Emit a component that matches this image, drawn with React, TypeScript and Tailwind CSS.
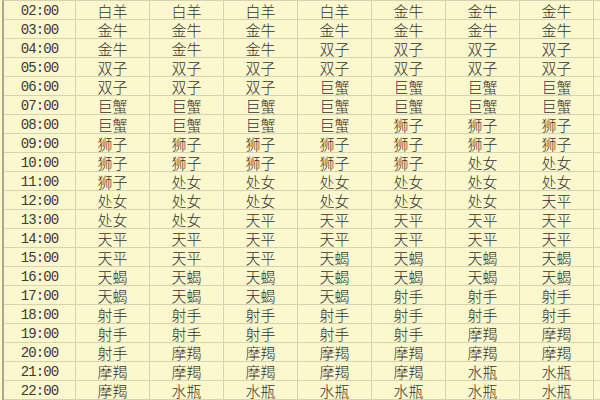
import React from "react";

const rows: [string, string[]][] = [
  ["02:00", ["白羊", "白羊", "白羊", "白羊", "金牛", "金牛", "金牛"]],
  ["03:00", ["金牛", "金牛", "金牛", "金牛", "金牛", "金牛", "金牛"]],
  ["04:00", ["金牛", "金牛", "金牛", "双子", "双子", "双子", "双子"]],
  ["05:00", ["双子", "双子", "双子", "双子", "双子", "双子", "双子"]],
  ["06:00", ["双子", "双子", "双子", "巨蟹", "巨蟹", "巨蟹", "巨蟹"]],
  ["07:00", ["巨蟹", "巨蟹", "巨蟹", "巨蟹", "巨蟹", "巨蟹", "巨蟹"]],
  ["08:00", ["巨蟹", "巨蟹", "巨蟹", "巨蟹", "狮子", "狮子", "狮子"]],
  ["09:00", ["狮子", "狮子", "狮子", "狮子", "狮子", "狮子", "狮子"]],
  ["10:00", ["狮子", "狮子", "狮子", "狮子", "狮子", "处女", "处女"]],
  ["11:00", ["狮子", "处女", "处女", "处女", "处女", "处女", "处女"]],
  ["12:00", ["处女", "处女", "处女", "处女", "处女", "处女", "天平"]],
  ["13:00", ["处女", "处女", "天平", "天平", "天平", "天平", "天平"]],
  ["14:00", ["天平", "天平", "天平", "天平", "天平", "天平", "天平"]],
  ["15:00", ["天平", "天平", "天平", "天蝎", "天蝎", "天蝎", "天蝎"]],
  ["16:00", ["天蝎", "天蝎", "天蝎", "天蝎", "天蝎", "天蝎", "天蝎"]],
  ["17:00", ["天蝎", "天蝎", "天蝎", "天蝎", "射手", "射手", "射手"]],
  ["18:00", ["射手", "射手", "射手", "射手", "射手", "射手", "射手"]],
  ["19:00", ["射手", "射手", "射手", "射手", "射手", "摩羯", "摩羯"]],
  ["20:00", ["射手", "摩羯", "摩羯", "摩羯", "摩羯", "摩羯", "摩羯"]],
  ["21:00", ["摩羯", "摩羯", "摩羯", "摩羯", "摩羯", "水瓶", "水瓶"]],
  ["22:00", ["摩羯", "水瓶", "水瓶", "水瓶", "水瓶", "水瓶", "水瓶"]],
];

export default function App() {
  return (
    <div className="w-[600px] h-[400px] overflow-hidden bg-[#FBF8CE]">
      <div className="ml-[2px] border-l-2 border-t border-l-[#A9A79A] border-t-[#D6D3B2] grid grid-cols-[72px_repeat(7,74px)_1fr] auto-rows-[19px]">
        {rows.map(([t, cells]) => (
          <React.Fragment key={t}>
            <div className="border-r border-b border-[#D6D3B2] flex items-center justify-center pt-[1px] text-[14px] text-[#3a3a3a] font-['Liberation_Mono',monospace] leading-none">
              {t.split("").map((ch, j) => (
                <span key={j} className="inline-block w-[7.5px] text-center">
                  {ch}
                </span>
              ))}
            </div>
            {cells.map((c, i) => (
              <div
                key={i}
                className="border-r border-b border-[#D6D3B2] flex items-center justify-center pt-[1px] text-[15px] font-light text-[#333] font-['Noto_Sans_CJK_SC',sans-serif] leading-none"
              >
                {c}
              </div>
            ))}
            <div className="border-b border-[#D6D3B2]" />
          </React.Fragment>
        ))}
      </div>
    </div>
  );
}
